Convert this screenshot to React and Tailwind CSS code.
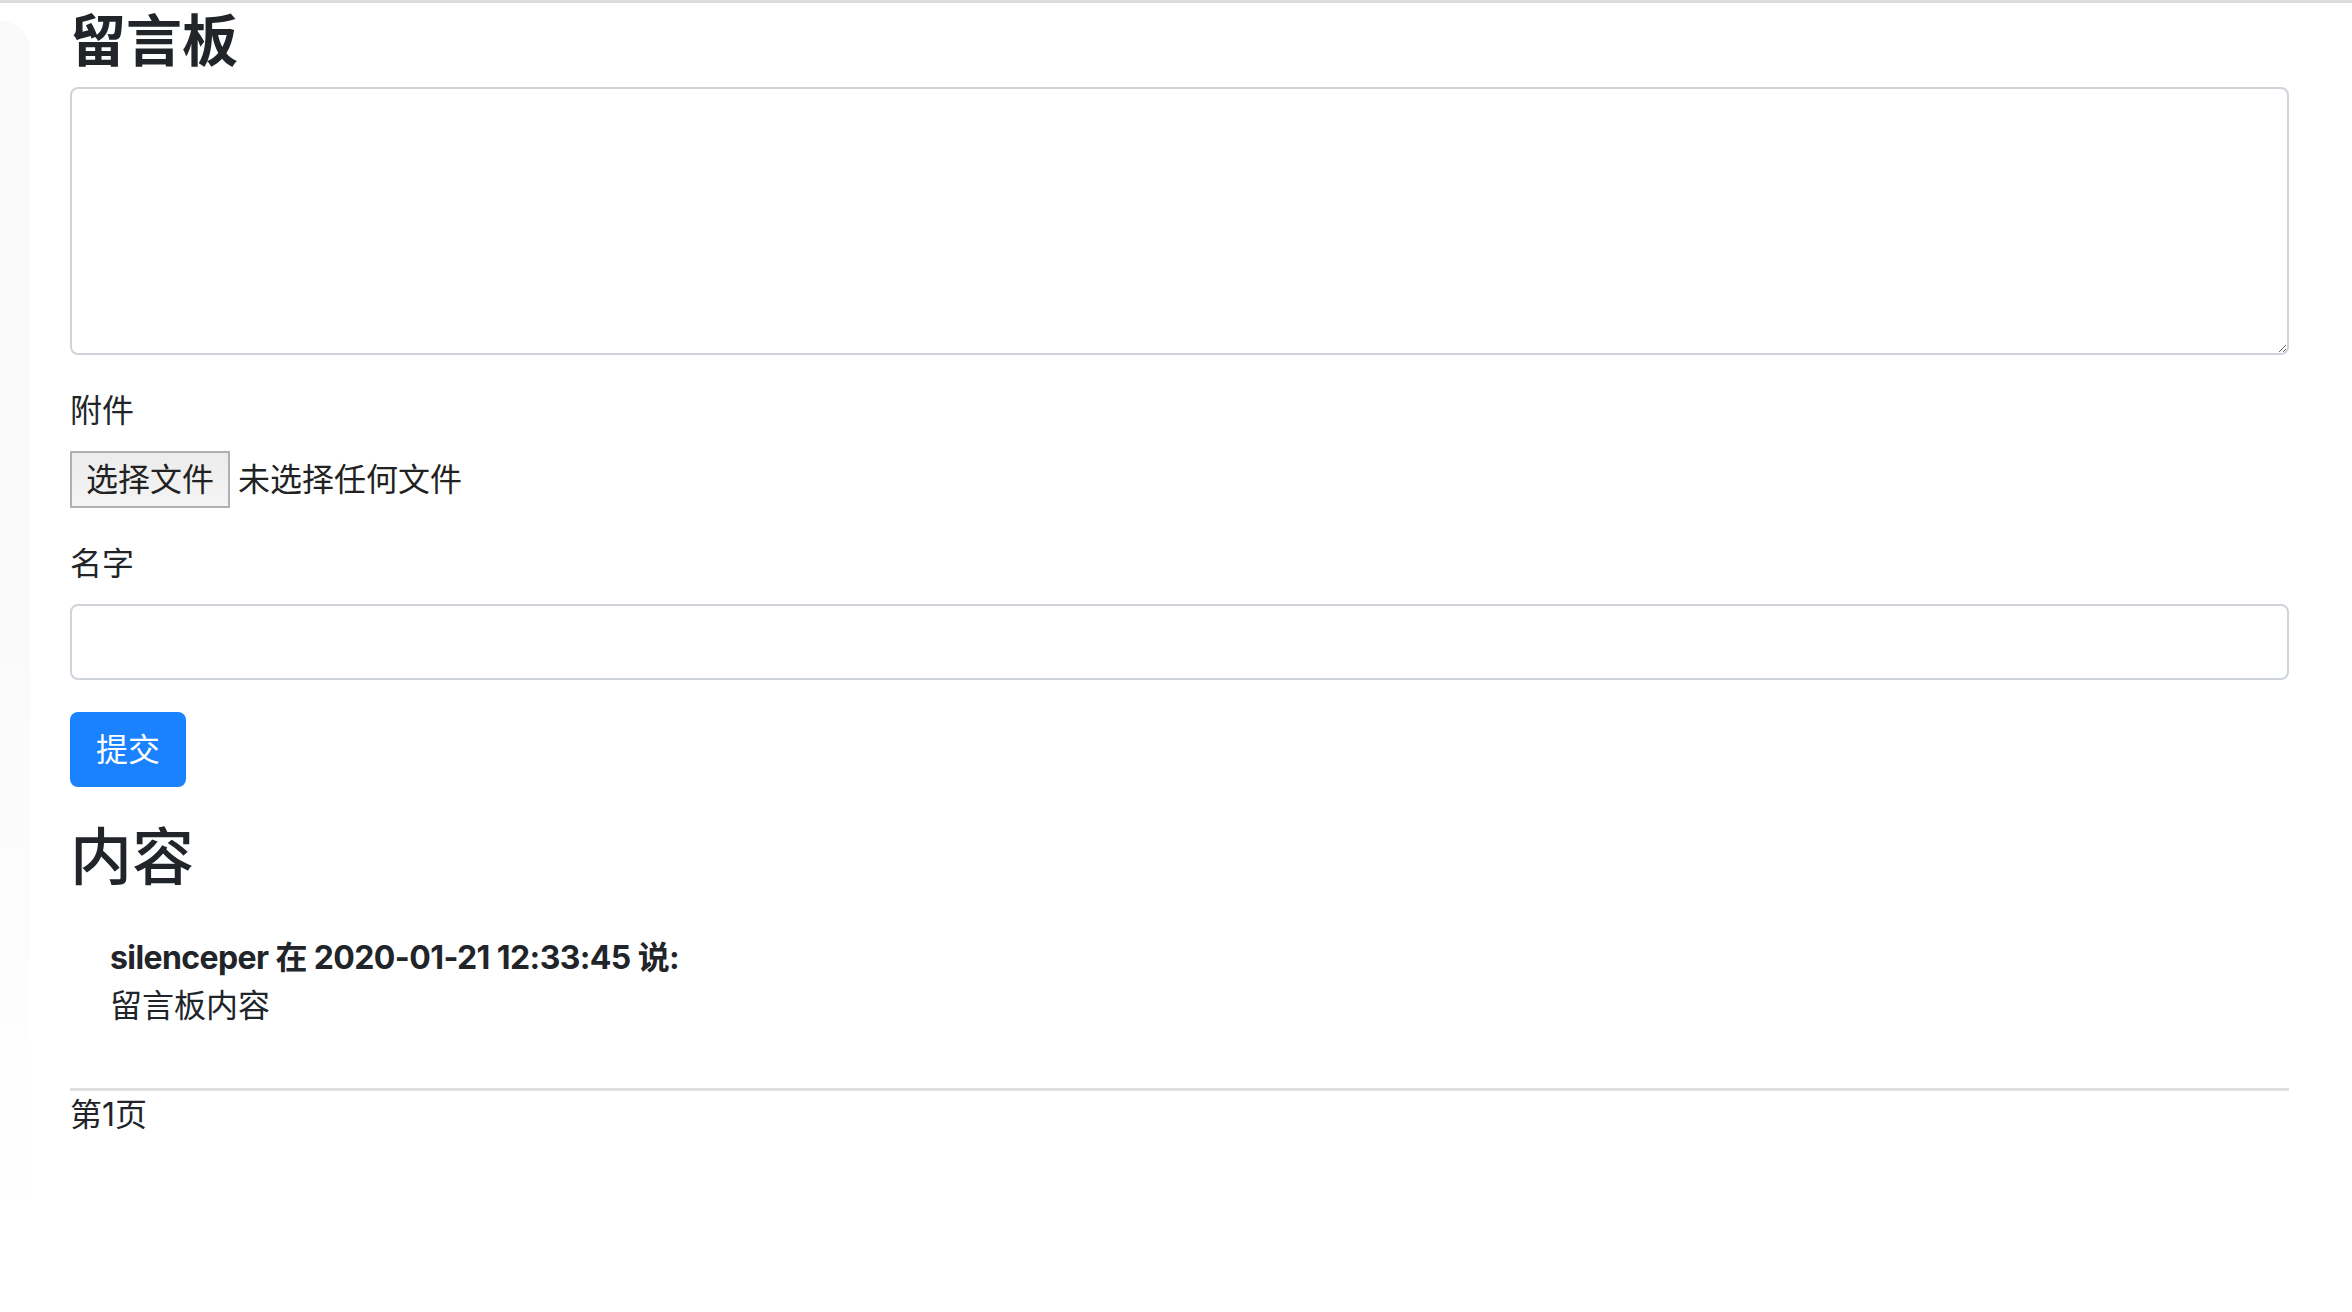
import React from 'react';

const font = "font-['Inter','Noto_Sans_CJK_SC',sans-serif]";

const Board = () => {
  return (
    <div className={`${font} min-h-[1312px] w-[2352px] bg-white text-[32px] leading-[48px] text-[#212529]`}>
      <div className="h-[3px] w-full bg-[#dcdce0]" />
      <div className="flex">
        {/* faint window edge on the left */}
        <div className="mt-[18px] h-[1200px] w-[30px] rounded-r-[28px] bg-gradient-to-b from-[#fafafa] via-[#fafafa] to-white" />
        <div className="ml-[40px] w-[2219px]">
          <h2 className="h-[84px] text-[56px] font-bold leading-[76px] text-[#212529]">留言板</h2>

          <textarea className="block h-[268px] w-full rounded-[8px] border-2 border-[#ced4da] bg-white px-[24px] py-[12px] text-[32px] outline-none" />

          <label className="mt-[32px] mb-[16px] block">附件</label>
          <div className="flex h-[57px] items-center">
            <div className="flex h-[57px] w-[160px] items-center justify-center border-2 border-[#b0b0b0] bg-gradient-to-b from-[#ececec] to-[#f4f4f4] text-[32px] text-[#222]">
              选择文件
            </div>
            <span className="ml-[8px] text-[#222]">未选择任何文件</span>
          </div>

          <label className="mt-[32px] mb-[16px] block">名字</label>
          <input type="text" className="block h-[76px] w-full rounded-[8px] border-2 border-[#ced4da] bg-white px-[24px] outline-none" />

          <button className="mt-[32px] flex h-[75px] w-[116px] items-center justify-center rounded-[8px] bg-[#1a82ff] text-[32px] text-white">
            提交
          </button>

          <h2 className="mt-[33px] h-[76px] text-[62px] font-medium leading-[76px]">内容</h2>

          <ul className="mt-[38px] pl-[40px]">
            <li>
              <div className="font-bold tracking-[-0.6px]">silenceper 在 2020-01-21 12:33:45 说:</div>
              <div>留言板内容</div>
            </li>
          </ul>

          <hr className="mt-[58px] border-t-[3px] border-[#e0e0e0]" />
          <div>第1页</div>
        </div>
      </div>
    </div>
  );
};

export default function App() {
  return <Board />;
}
